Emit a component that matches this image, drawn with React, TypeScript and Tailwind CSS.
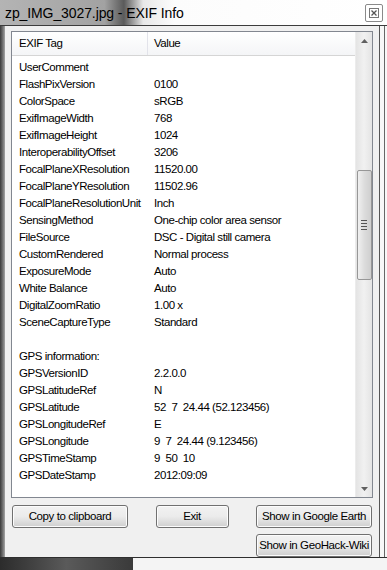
import React from 'react';

const rows: [string, string][] = [
  ['UserComment', ''],
  ['FlashPixVersion', '0100'],
  ['ColorSpace', 'sRGB'],
  ['ExifImageWidth', '768'],
  ['ExifImageHeight', '1024'],
  ['InteroperabilityOffset', '3206'],
  ['FocalPlaneXResolution', '11520.00'],
  ['FocalPlaneYResolution', '11502.96'],
  ['FocalPlaneResolutionUnit', 'Inch'],
  ['SensingMethod', 'One-chip color area sensor'],
  ['FileSource', 'DSC - Digital still camera'],
  ['CustomRendered', 'Normal process'],
  ['ExposureMode', 'Auto'],
  ['White Balance', 'Auto'],
  ['DigitalZoomRatio', '1.00 x'],
  ['SceneCaptureType', 'Standard'],
  ['', ''],
  ['GPS information:', ''],
  ['GPSVersionID', '2.2.0.0'],
  ['GPSLatitudeRef', 'N'],
  ['GPSLatitude', '52  7  24.44 (52.123456)'],
  ['GPSLongitudeRef', 'E'],
  ['GPSLongitude', '9  7  24.44 (9.123456)'],
  ['GPSTimeStamp', '9  50  10'],
  ['GPSDateStamp', '2012:09:09'],
];

function WinButton({ label, className }: { label: string; className: string }) {
  return (
    <button
      className={`h-[23px] whitespace-nowrap rounded-[3px] border border-[#707070] bg-gradient-to-b from-[#f2f2f2] via-[#ebebeb] to-[#cfcfcf] text-[11.5px] tracking-[-0.4px] text-black shadow-[inset_0_0_0_1px_#fcfcfc] ${className}`}
    >
      {label}
    </button>
  );
}

export default function App() {
  return (
    <div className="w-[387px] h-[570px] flex flex-col bg-[#2a2a2a] overflow-hidden font-['Liberation_Sans',Arial,sans-serif] text-black">
      {/* Title bar */}
      <div className="h-[25px] flex items-center justify-between pl-[5px] pr-[4px] bg-[linear-gradient(to_right,#b4b4b4_0%,#a2a2a2_27%,#5a5a5a_32%,#e8e8e8_37%,#fcfcfc_45%,#ffffff_100%)]">
        <span className="text-[14px] leading-none tracking-[-0.1px]">zp_IMG_3027.jpg - EXIF Info</span>
        <span className="w-[18px] h-[18px] border border-[#8a8a8a] rounded-[2px] bg-white flex items-center justify-center mt-[1px]">
          <svg width="10" height="10" viewBox="0 0 10 10">
            <rect x="0.5" y="0.5" width="9" height="9" fill="none" stroke="#777" strokeWidth="1" />
            <path d="M2.5 2.5 L7.5 7.5 M7.5 2.5 L2.5 7.5" stroke="#555" strokeWidth="1.3" />
          </svg>
        </span>
      </div>

      {/* Body */}
      <div className="flex h-[532px] border-t border-[#3c3c3c]">
        <div className="w-[5px] bg-gradient-to-r from-[#3a3a3a] to-[#8c8c8c] border-r border-[#9a9a9a]" />
        <div className="w-[374px] bg-[#f0f0f0] flex flex-col pt-[5px] pl-[6px] pr-[6px] text-[11.5px] tracking-[-0.45px]">
          {/* ListView */}
          <div className="h-[468px] border border-[#828790] bg-white flex">
            <div className="flex-1 flex flex-col overflow-hidden">
              <div className="h-[24px] flex items-center bg-gradient-to-b from-white to-[#f4f5f7] border-b border-[#d5d5d5]">
                <div className="w-[136px] h-full flex items-center pl-[7px] border-r border-[#e2e3ea]">EXIF Tag</div>
                <div className="pl-[6px]">Value</div>
              </div>
              <div className="pt-[3px]">
                {rows.map(([k, v], i) => (
                  <div key={i} className="h-[17px] leading-[17px] flex whitespace-pre">
                    <div className="w-[136px] pl-[7px]">{k}</div>
                    <div className="pl-[6px]">{v}</div>
                  </div>
                ))}
              </div>
            </div>
            {/* Scrollbar */}
            <div className="w-[17px] bg-gradient-to-r from-[#e4e4e4] via-[#f1f1f1] to-[#e4e4e4] border-l border-[#ececec] flex flex-col items-center">
              <div className="h-[17px] w-full flex items-center justify-center">
                <svg width="7" height="4" viewBox="0 0 7 4"><path d="M0 4 L3.5 0 L7 4 Z" fill="#606060" /></svg>
              </div>
              <div className="h-[121px]" />
              <div className="w-[15px] h-[110px] rounded-[2px] border border-[#979797] bg-gradient-to-r from-[#f0f0f0] via-[#dcdcdc] to-[#cfcfcf] flex flex-col items-center justify-center gap-[2px]">
                <div className="w-[6px] h-px bg-[#555]" />
                <div className="w-[6px] h-px bg-[#555]" />
                <div className="w-[6px] h-px bg-[#555]" />
                <div className="w-[6px] h-px bg-[#555]" />
              </div>
              <div className="flex-1" />
              <div className="h-[17px] w-full flex items-center justify-center">
                <svg width="7" height="4" viewBox="0 0 7 4"><path d="M0 0 L3.5 4 L7 0 Z" fill="#606060" /></svg>
              </div>
            </div>
          </div>

          {/* Buttons */}
          <div className="flex justify-between pl-[1px] pr-[1px] mt-[7px]">
            <WinButton label="Copy to clipboard" className="w-[116px]" />
            <WinButton label="Exit" className="w-[73px]" />
            <WinButton label="Show in Google Earth" className="w-[116px]" />
          </div>
          <div className="flex justify-end pr-[1px] mt-[6px]">
            <WinButton label="Show in GeoHack-Wiki" className="w-[116px] h-[21px]" />
          </div>
        </div>
        <div className="w-[8px] bg-[#f7f7f7] border-l border-[#555] flex">
          <div className="w-[5px] border-r border-[#666]" />
        </div>
      </div>

      {/* Bottom frame */}
      <div className="flex-1 flex border-t border-[#2e2e2e]">
        <div className="w-[133px] bg-gradient-to-r from-[#2c2c2c] via-[#5a5a5a] to-[#3a3a3a]" />
        <div className="flex-1 bg-[#f4f4f4]" />
      </div>
    </div>
  );
}
